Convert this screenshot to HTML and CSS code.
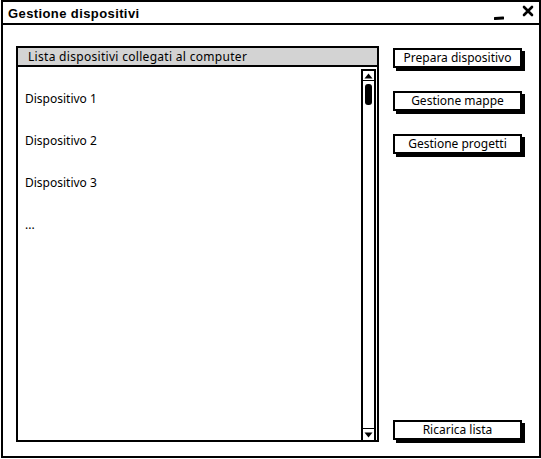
FILE: index.html
```html
<!DOCTYPE html>
<html>
<head>
<meta charset="utf-8">
<link rel="stylesheet" href="styles.css">
</head>
<body>
<div class="window">
  <div class="titlebar">
    <span class="title">Gestione dispositivi</span>
    <span class="controls">
      <svg class="min" width="10" height="6" viewBox="0 0 10 6"><path d="M1 3.5 L9 3" stroke="#000" stroke-width="3" stroke-linecap="round"/></svg>
      <svg class="close" width="12" height="12" viewBox="0 0 12 12"><path d="M2 2 L10 10 M10 2 L2 10" stroke="#000" stroke-width="2.6" stroke-linecap="round"/></svg>
    </span>
  </div>
  <div class="content">
    <div class="list">
      <div class="list-header">Lista dispositivi collegati al computer</div>
      <div class="list-body">
        <div class="items">
          <div class="item">Dispositivo 1</div>
          <div class="item">Dispositivo 2</div>
          <div class="item">Dispositivo 3</div>
          <div class="item">...</div>
        </div>
        <div class="scrollbar">
          <div class="arrow up"><svg width="9" height="6" viewBox="0 0 9 6"><path d="M0.5 5.5 L4.5 0.5 L8.5 5.5 Z" fill="#000"/></svg></div>
          <div class="track"><div class="thumb"></div></div>
          <div class="arrow down"><svg width="9" height="6" viewBox="0 0 9 6"><path d="M0.5 0.5 L4.5 5.5 L8.5 0.5 Z" fill="#000"/></svg></div>
        </div>
      </div>
    </div>
    <div class="buttons">
      <div class="btn">Prepara dispositivo</div>
      <div class="btn">Gestione mappe</div>
      <div class="btn">Gestione progetti</div>
      <div class="btn bottom">Ricarica lista</div>
    </div>
  </div>
</div>
</body>
</html>
```
FILE: styles.css
```css
* { box-sizing: border-box; }
html, body { margin: 0; padding: 0; background: #fff; }
body { font-family: "Noto Sans", "DejaVu Sans", sans-serif; color: #000; }

.window {
  margin-left: 1px;
  width: 540px;
  height: 458px;
  border: 2px solid #000;
  display: flex;
  flex-direction: column;
}

.titlebar {
  height: 23px;
  border-bottom: 2px solid #000;
  display: flex;
  align-items: center;
  justify-content: space-between;
  padding: 0 5px 0 5px;
}
.title {
  font-family: "Liberation Sans", Arial, sans-serif;
  font-weight: bold;
  font-size: 13px;
  letter-spacing: 0.4px;
  padding-top: 1px;
}
.controls { display: flex; align-items: center; gap: 18px; }
.controls .min { margin-top: 10px; }
.controls .close { margin-top: -4px; }

.content {
  flex: 1;
  display: flex;
  padding: 21px 0 14px 13px;
}

.list {
  width: 363px;
  border: 2px solid #000;
  display: flex;
  flex-direction: column;
}
.list-header {
  height: 19px;
  background: #d3d3d3;
  border-bottom: 2px solid #000;
  font-size: 12px;
  letter-spacing: 0.3px;
  line-height: 17px;
  padding-left: 10px;
}
.list-body {
  flex: 1;
  display: flex;
}
.items {
  flex: 1;
  padding: 21px 0 0 7px;
  font-size: 12px;
}
.item {
  height: 42px;
  line-height: 22px;
}
.scrollbar {
  width: 15px;
  margin: 2px 1px 0 0;
  border: 2px solid #000;
  border-bottom: none;
  display: flex;
  flex-direction: column;
}
.arrow {
  height: 10px;
  display: flex;
  align-items: center;
  justify-content: center;
}
.arrow.up { border-bottom: 1px solid #000; }
.arrow.down { border-top: 1px solid #000; height: 12px; }
.track { flex: 1; padding: 3px 0 0 2px; }
.thumb {
  width: 7px;
  height: 21px;
  background: #000;
  border-radius: 3px;
}

.buttons {
  margin-left: 14px;
  width: 129px;
  display: flex;
  flex-direction: column;
  gap: 23px;
  padding-top: 2px;
}
.btn {
  height: 20px;
  border: 2px solid #000;
  box-shadow: 3px 3px 0 #000;
  font-size: 12px;
  line-height: 16px;
  text-align: center;
}
.btn.bottom { margin-top: auto; margin-bottom: 2px; }
```
